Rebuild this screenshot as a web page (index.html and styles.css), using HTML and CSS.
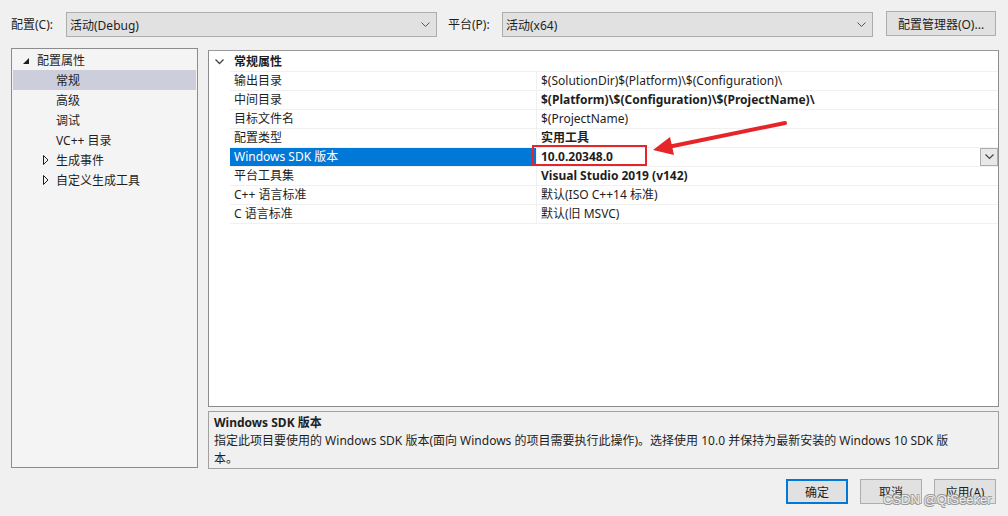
FILE: index.html
```html
<!DOCTYPE html>
<html lang="zh-CN">
<head>
<meta charset="utf-8">
<title>属性页</title>
<link rel="stylesheet" href="styles.css">
</head>
<body>
<div class="dialog">
  <div class="topbar">
    <span class="lbl lbl-cfg">配置(C):</span>
    <div class="combo">
      <span>活动(Debug)</span>
      <svg class="chev" width="9" height="6" viewBox="0 0 9 6"><path d="M0.5 0.5 L4.5 4.5 L8.5 0.5" fill="none" stroke="#555" stroke-width="1"/></svg>
    </div>
    <span class="lbl lbl-plat">平台(P):</span>
    <div class="combo">
      <span>活动(x64)</span>
      <svg class="chev" width="9" height="6" viewBox="0 0 9 6"><path d="M0.5 0.5 L4.5 4.5 L8.5 0.5" fill="none" stroke="#555" stroke-width="1"/></svg>
    </div>
    <button class="btn btn-mgr">配置管理器(O)...</button>
  </div>

  <div class="main">
    <div class="tree">
      <div class="titem root">
        <svg class="tri-fill" width="6" height="6" viewBox="0 0 6 6"><path d="M6 0 L6 6 L0 6 Z" fill="#1e1e1e"/></svg>
        <span>配置属性</span>
      </div>
      <div class="titem child sel"><span>常规</span></div>
      <div class="titem child"><span>高级</span></div>
      <div class="titem child"><span>调试</span></div>
      <div class="titem child"><span>VC++ 目录</span></div>
      <div class="titem child exp">
        <svg class="tri-out" width="6" height="10" viewBox="0 0 6 10"><path d="M0.5 0.5 L5 5 L0.5 9.5 Z" fill="none" stroke="#1e1e1e" stroke-width="1"/></svg>
        <span>生成事件</span>
      </div>
      <div class="titem child exp">
        <svg class="tri-out" width="6" height="10" viewBox="0 0 6 10"><path d="M0.5 0.5 L5 5 L0.5 9.5 Z" fill="none" stroke="#1e1e1e" stroke-width="1"/></svg>
        <span>自定义生成工具</span>
      </div>
    </div>

    <div class="right">
      <div class="grid">
        <div class="cat">
          <svg class="cat-chev" width="9" height="6" viewBox="0 0 9 6"><path d="M0.5 0.5 L4.5 4.5 L8.5 0.5" fill="none" stroke="#444" stroke-width="1.3"/></svg>
          <span>常规属性</span>
        </div>
        <div class="row"><div class="name">输出目录</div><div class="val">$(SolutionDir)$(Platform)\$(Configuration)\</div></div>
        <div class="row"><div class="name">中间目录</div><div class="val b">$(Platform)\$(Configuration)\$(ProjectName)\</div></div>
        <div class="row"><div class="name">目标文件名</div><div class="val">$(ProjectName)</div></div>
        <div class="row"><div class="name">配置类型</div><div class="val b">实用工具</div></div>
        <div class="row selrow"><div class="name">Windows SDK 版本</div><div class="val b">10.0.20348.0
          <span class="dd"><svg width="9" height="6" viewBox="0 0 9 6"><path d="M0.5 0.5 L4.5 4.5 L8.5 0.5" fill="none" stroke="#444" stroke-width="1.2"/></svg></span>
          <span class="redbox"></span>
        </div></div>
        <div class="row"><div class="name">平台工具集</div><div class="val b">Visual Studio 2019 (v142)</div></div>
        <div class="row"><div class="name">C++ 语言标准</div><div class="val">默认(ISO C++14 标准)</div></div>
        <div class="row"><div class="name">C 语言标准</div><div class="val">默认(旧 MSVC)</div></div>
      </div>
      <div class="desc">
        <div class="desc-title">Windows SDK 版本</div>
        <div class="desc-text">指定此项目要使用的 Windows SDK 版本(面向 Windows 的项目需要执行此操作)。选择使用 10.0 并保持为最新安装的 Windows 10 SDK 版本。</div>
      </div>
    </div>
  </div>

  <div class="bottom">
    <button class="btn btn-ok">确定</button>
    <button class="btn">取消</button>
    <button class="btn">应用(A)</button>
  </div>

  <svg class="arrow" width="1008" height="516" viewBox="0 0 1008 516">
    <line x1="785" y1="123" x2="668" y2="147" stroke="#e5252a" stroke-width="4" stroke-linecap="round"/>
    <path d="M653 150 L670 137 L674 155 Z" fill="#e5252a"/>
  </svg>
  <div class="watermark">CSDN @QtSeeker</div>
</div>
</body>
</html>
```

FILE: styles.css
```css
* { box-sizing: border-box; }
html, body { margin: 0; padding: 0; }
body {
  background: #f0f0f0;
  font-family: "Noto Sans", "Noto Sans CJK SC", sans-serif;
  font-size: 12px;
  color: #1e1e1e;
}
.dialog {
  position: relative;
  width: 1008px;
  height: 516px;
  overflow: hidden;
}
.topbar {
  display: flex;
  align-items: center;
  padding: 11px 0 0 11px;
  height: 37px;
}
.lbl { white-space: nowrap; }
.lbl-cfg { width: 55px; }
.lbl-plat { width: 54px; margin-left: 11px; }
.combo {
  width: 371px;
  height: 25px;
  margin-top: 1px;
  background: #e1e1e1;
  border: 1px solid #adadad;
  display: flex;
  align-items: center;
  justify-content: space-between;
  padding: 0 6px 0 3px;
}
.chev { margin-top: 1px; }
.btn {
  font-family: inherit;
  font-size: 12px;
  color: #1e1e1e;
  background: #e1e1e1;
  border: 1px solid #adadad;
  height: 25px;
  padding: 0;
}
.btn-mgr { width: 110px; margin-left: 13px; margin-top: -1px; }

.main {
  display: flex;
  gap: 10px;
  padding: 11px 0 0 11px;
  height: 432px;
}
.tree {
  width: 187px;
  height: 420px;
  background: #f4f4f4;
  border: 1px solid #8c8c8c;
  padding-top: 1px;
}
.titem {
  height: 20px;
  display: flex;
  align-items: center;
  position: relative;
  margin: 0 1px;
}
.titem.root { padding-left: 24px; }
.titem.child { padding-left: 43px; }
.titem.sel { background: #cccedb; }
.tri-fill { position: absolute; left: 10px; top: 8px; }
.tri-out { position: absolute; left: 30px; top: 5px; }

.right {
  width: 791px;
  display: flex;
  flex-direction: column;
  gap: 4px;
}
.grid {
  height: 359px;
  background: #fff;
  border: 1px solid #8c8c8c;
  border-top-color: #9a9a9a;
  margin-top: 2px;
}
.cat {
  height: 21px;
  display: flex;
  align-items: center;
  font-weight: bold;
  position: relative;
  border-bottom: 1px solid #f0f0f0;
  margin-left: 21px;
  padding-left: 4px;
}
.cat-chev { position: absolute; left: -15px; top: 8px; }
.row {
  display: flex;
  height: 19px;
  margin-left: 21px;
  border-bottom: 1px solid #f0f0f0;
}
.name {
  width: 307px;
  padding-left: 4px;
  line-height: 18px;
  border-right: 1px solid #f0f0f0;
  white-space: nowrap;
}
.val {
  flex: 1;
  padding-left: 4px;
  line-height: 18px;
  white-space: nowrap;
  position: relative;
}
.b { font-weight: bold; }
.selrow .name {
  background: #0078d7;
  color: #fff;
}
.dd {
  position: absolute;
  right: 0;
  top: 0;
  width: 18px;
  height: 18px;
  background: #e8e8e8;
  border: 1px solid #adadad;
  display: flex;
  align-items: center;
  justify-content: center;
}
.redbox {
  position: absolute;
  left: -5px;
  top: -3px;
  width: 115px;
  height: 21px;
  border: 2px solid #e5252a;
}

.desc {
  height: 58px;
  background: #f0f0f0;
  border: 1px solid #a0a0a0;
  padding: 2px 5px 0 5px;
  line-height: 18px;
}
.desc-title { font-weight: bold; }
.desc-text { width: 756px; }

.bottom {
  display: flex;
  justify-content: flex-end;
  gap: 12px;
  padding: 10px 12px 0 0;
}
.bottom .btn { width: 62px; height: 25px; }
.btn-ok { border: 2px solid #0078d7; }

.arrow { position: absolute; left: 0; top: 0; pointer-events: none; }
.watermark {
  position: absolute;
  left: 883px;
  top: 492px;
  font-family: "Liberation Sans", sans-serif;
  font-size: 13px;
  line-height: 15px;
  color: #ececec;
  text-shadow: 0.6px 0.6px 0 #9a9a9a, -0.6px -0.6px 0 #9a9a9a, 0.6px -0.6px 0 #9a9a9a, -0.6px 0.6px 0 #9a9a9a;
  white-space: nowrap;
}
```
